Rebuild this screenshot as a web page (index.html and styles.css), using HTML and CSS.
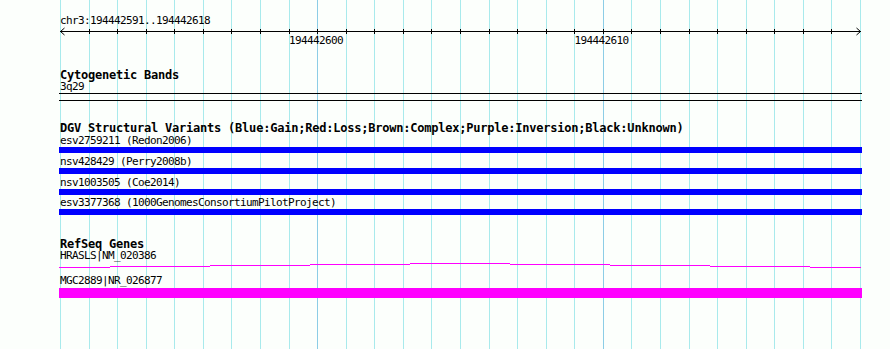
FILE: index.html
```html
<!DOCTYPE html>
<html>
<head>
<meta charset="utf-8">
<link rel="stylesheet" href="styles.css">
</head>
<body>
<svg class="grid" width="890" height="349" viewBox="0 0 890 349" shape-rendering="crispEdges">
  <g class="gl">
    <rect x="60" y="0" width="1" height="349"/>
    <rect x="89" y="0" width="1" height="349"/>
    <rect x="117" y="0" width="1" height="349"/>
    <rect x="146" y="0" width="1" height="349"/>
    <rect x="174" y="0" width="1" height="349"/>
    <rect x="203" y="0" width="1" height="349"/>
    <rect x="231" y="0" width="1" height="349"/>
    <rect x="260" y="0" width="1" height="349"/>
    <rect x="289" y="0" width="1" height="349"/>
    <rect x="346" y="0" width="1" height="349"/>
    <rect x="374" y="0" width="1" height="349"/>
    <rect x="403" y="0" width="1" height="349"/>
    <rect x="431" y="0" width="1" height="349"/>
    <rect x="460" y="0" width="1" height="349"/>
    <rect x="489" y="0" width="1" height="349"/>
    <rect x="517" y="0" width="1" height="349"/>
    <rect x="546" y="0" width="1" height="349"/>
    <rect x="574" y="0" width="1" height="349"/>
    <rect x="631" y="0" width="1" height="349"/>
    <rect x="660" y="0" width="1" height="349"/>
    <rect x="689" y="0" width="1" height="349"/>
    <rect x="717" y="0" width="1" height="349"/>
    <rect x="746" y="0" width="1" height="349"/>
    <rect x="774" y="0" width="1" height="349"/>
    <rect x="803" y="0" width="1" height="349"/>
    <rect x="831" y="0" width="1" height="349"/>
    <rect x="860" y="0" width="1" height="349"/>
  </g>
  <g class="gl-major">
    <rect x="317" y="0" width="1" height="349"/>
    <rect x="603" y="0" width="1" height="349"/>
  </g>
</svg>

<div class="tracks">
  <div class="chrom">chr3:194442591..194442618</div>
  <svg class="ruler" width="803" height="20" viewBox="0 0 803 20" shape-rendering="crispEdges">
    <rect x="1" y="4" width="801" height="1" fill="#000"/>
    <g fill="#000">
      <rect x="30" y="2" width="1" height="5"/>
      <rect x="58" y="2" width="1" height="5"/>
      <rect x="87" y="2" width="1" height="5"/>
      <rect x="115" y="2" width="1" height="5"/>
      <rect x="144" y="2" width="1" height="5"/>
      <rect x="172" y="2" width="1" height="5"/>
      <rect x="201" y="2" width="1" height="5"/>
      <rect x="230" y="2" width="1" height="5"/>
      <rect x="258" y="2" width="1" height="5"/>
      <rect x="287" y="2" width="1" height="5"/>
      <rect x="315" y="2" width="1" height="5"/>
      <rect x="344" y="2" width="1" height="5"/>
      <rect x="372" y="2" width="1" height="5"/>
      <rect x="401" y="2" width="1" height="5"/>
      <rect x="430" y="2" width="1" height="5"/>
      <rect x="458" y="2" width="1" height="5"/>
      <rect x="487" y="2" width="1" height="5"/>
      <rect x="515" y="2" width="1" height="5"/>
      <rect x="544" y="2" width="1" height="5"/>
      <rect x="572" y="2" width="1" height="5"/>
      <rect x="601" y="2" width="1" height="5"/>
      <rect x="630" y="2" width="1" height="5"/>
      <rect x="658" y="2" width="1" height="5"/>
      <rect x="687" y="2" width="1" height="5"/>
      <rect x="715" y="2" width="1" height="5"/>
      <rect x="744" y="2" width="1" height="5"/>
      <rect x="772" y="2" width="1" height="5"/>
    </g>
    <path d="M1.5 4.5 L5.5 1 M1.5 4.5 L5.5 8 M801.5 4.5 L797.5 1 M801.5 4.5 L797.5 8" stroke="#000" stroke-width="1" fill="none" shape-rendering="auto"/>
    <text class="tick-label" x="230" y="17">194442600</text>
    <text class="tick-label" x="515.5" y="17">194442610</text>
  </svg>

  <section class="track track-cyto">
    <div class="title">Cytogenetic Bands</div>
    <div class="label label-tight">3q29</div>
    <div class="band"></div>
  </section>

  <section class="track track-dgv">
    <div class="title">DGV Structural Variants (Blue:Gain;Red:Loss;Brown:Complex;Purple:Inversion;Black:Unknown)</div>
    <div class="feature f1">
      <div class="label">esv2759211 (Redon2006)</div>
      <div class="bar bar-gain"></div>
    </div>
    <div class="feature f2">
      <div class="label">nsv428429 (Perry2008b)</div>
      <div class="bar bar-gain"></div>
    </div>
    <div class="feature f3">
      <div class="label">nsv1003505 (Coe2014)</div>
      <div class="bar bar-gain"></div>
    </div>
    <div class="feature f4">
      <div class="label">esv3377368 (1000GenomesConsortiumPilotProject)</div>
      <div class="bar bar-gain"></div>
    </div>
  </section>

  <section class="track track-refseq">
    <div class="title title-tight">RefSeq Genes</div>
    <div class="label">HRASLS|NM_020386</div>
    <svg class="intron" width="803" height="7" viewBox="0 0 803 7" shape-rendering="crispEdges">
      <g fill="#ff00ff">
        <rect x="0" y="5" width="51" height="1"/>
        <rect x="51" y="4" width="100" height="1"/>
        <rect x="151" y="3" width="100" height="1"/>
        <rect x="251" y="2" width="100" height="1"/>
        <rect x="351" y="1" width="100" height="1"/>
        <rect x="451" y="2" width="100" height="1"/>
        <rect x="551" y="3" width="100" height="1"/>
        <rect x="651" y="4" width="100" height="1"/>
        <rect x="751" y="5" width="51" height="1"/>
      </g>
    </svg>
    <div class="label label-gap">MGC2889|NR_026877</div>
    <div class="bar bar-gene"></div>
  </section>
</div>
</body>
</html>
```

FILE: styles.css
```css
html, body {
  margin: 0;
  padding: 0;
  background: #fcfffc;
}

body {
  width: 890px;
  height: 349px;
  overflow: hidden;
  position: relative;
  color: #000;
  font-family: "DejaVu Sans Mono", "Liberation Mono", monospace;
}

.grid {
  position: absolute;
  left: 0;
  top: 0;
  z-index: 0;
}

.gl {
  fill: #a8eaec;
}

.gl-major {
  fill: #8ccde6;
}

.tracks {
  position: relative;
  z-index: 1;
  width: 803px;
  padding-left: 59px;
  display: flex;
  flex-direction: column;
}

.chrom {
  padding-top: 15px;
  padding-left: 1px;
  font-size: 11px;
  line-height: 12px;
  letter-spacing: -0.62px;
}

.ruler {
  display: block;
}

.tick-label {
  font-family: "DejaVu Sans Mono", "Liberation Mono", monospace;
  font-size: 11px;
  letter-spacing: -0.62px;
  fill: #000;
}

.track {
  display: flex;
  flex-direction: column;
}

.title {
  padding-left: 1px;
  font-weight: bold;
  font-size: 12px;
  line-height: 12px;
  letter-spacing: -0.22px;
  white-space: pre;
}

.title-tight {
  line-height: 11px;
}

.label {
  padding-left: 1px;
  font-size: 11px;
  line-height: 12px;
  letter-spacing: -0.62px;
  white-space: pre;
}

.label-tight {
  line-height: 11px;
}

.label-gap {
  margin-top: 6px;
}

.track-cyto {
  margin-top: 22px;
}

.band {
  margin-top: 1px;
  height: 6px;
  border-top: 1px solid #000;
  border-bottom: 1px solid #000;
}

.track-dgv {
  margin-top: 21px;
}

.feature {
  display: flex;
  flex-direction: column;
}

.f1 { margin-top: 1px; }
.f2 { margin-top: 3px; }
.f3 { margin-top: 3px; }
.f4 { margin-top: 2px; }

.bar {
  width: 803px;
}

.bar-gain {
  height: 6px;
  background: #0000ff;
}

.track-refseq {
  margin-top: 24px;
}

.intron {
  display: block;
}

.bar-gene {
  margin-top: 1px;
  height: 10px;
  background: #ff00ff;
}
```
